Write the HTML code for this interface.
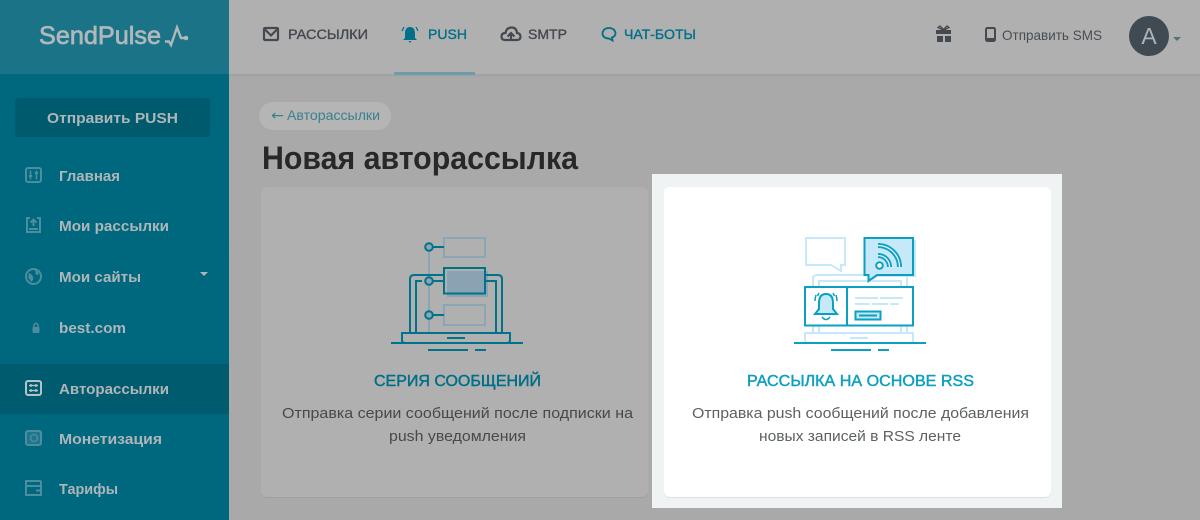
<!DOCTYPE html>
<html lang="ru"><head><meta charset="utf-8"><title>SendPulse</title>
<style>
html,body{margin:0;padding:0;width:1200px;height:520px;overflow:hidden;background:#a8a9a8}
svg{display:block;position:absolute;left:0;top:0}
text{font-family:"Liberation Sans",Arial,sans-serif}
.m{font-size:15px;font-weight:700;fill:#aeb6b8}
.n{font-size:13.5px;stroke-width:.35}
.d{font-size:15px}
.t{font-size:15.5px;stroke-width:.45}
</style></head><body>
<svg width="1200" height="520" viewBox="0 0 1200 520" xmlns="http://www.w3.org/2000/svg">
<defs><linearGradient id="s" x1="0" y1="0" x2="0" y2="1"><stop offset="0" stop-color="#9fa1a0"/><stop offset="1" stop-color="#a8a9a8"/></linearGradient></defs>
<!-- backgrounds -->
<rect width="1200" height="520" fill="#a8a9a8"/>
<rect x="229" y="74" width="971" height="4" fill="url(#s)"/>
<rect x="229" width="971" height="74" fill="#b0b0b0"/>
<rect width="229" height="520" fill="#00687e"/>
<rect width="229" height="74" fill="#1b7387"/>
<rect y="364" width="229" height="50" fill="#005b6e"/>
<rect y="251" width="229" height="1" fill="#0a6276"/>
<rect x="394" y="72" width="81" height="3" fill="#6b9da9"/>
<!-- logo -->
<text x="39" y="44" font-size="25" fill="#afb8ba" stroke="#afb8ba" stroke-width=".7" textLength="122" lengthAdjust="spacingAndGlyphs">SendPulse</text>
<path d="M165 41.500H169L171 45L177 27.500L181 38H186" fill="none" stroke="#afb8ba" stroke-width="2.400"/><circle cx="186" cy="38" r="2.300" fill="#afb8ba"/>
<!-- send button -->
<rect x="15" y="98" width="195" height="39" rx="3" fill="#005a6d"/>
<text x="47" y="123" class="m" textLength="131" lengthAdjust="spacingAndGlyphs">Отправить PUSH</text>
<!-- menu -->
<text x="59" y="181" class="m" textLength="61" lengthAdjust="spacingAndGlyphs">Главная</text>
<text x="59" y="231" class="m" textLength="110" lengthAdjust="spacingAndGlyphs">Мои рассылки</text>
<text x="59" y="282" class="m" textLength="82" lengthAdjust="spacingAndGlyphs">Мои сайты</text>
<text x="59" y="333" class="m" textLength="67" lengthAdjust="spacingAndGlyphs">best.com</text>
<text x="59" y="394" class="m" textLength="110" lengthAdjust="spacingAndGlyphs">Авторассылки</text>
<text x="59" y="444" class="m" textLength="103" lengthAdjust="spacingAndGlyphs">Монетизация</text>
<text x="59" y="494" class="m" textLength="59" lengthAdjust="spacingAndGlyphs">Тарифы</text>
<path d="M200 272H208L204 276Z" fill="#aeb6b8"/>
<!-- menu icons -->
<g fill="none" stroke="#4c8d9e" stroke-width="2">
<rect x="26" y="168" width="15" height="14" rx="2"/>
<path d="M30.500 170.500V179.500M36.500 170.500V179.500" stroke-width="1.500"/><path d="M28.800 176H32.200M34.800 173H38.200" stroke-width="2"/>
<path d="M30 218H27V232H40V218H37"/><path d="M33.500 226V220M30.500 222.500L33.500 219.500L36.500 222.500M29 229H38"/>
<circle cx="33.500" cy="276.500" r="7.500"/><path d="M29 273Q32 274 33 277Q34 280 31 282Q30 279 28 278ZM35 270Q38 271 39 274L36 275Z" fill="#4c8d9e" stroke="none"/>
<path d="M34 327V325Q36 321.500 38 325V327" stroke-width="1.500"/>
<rect x="26" y="431" width="15" height="14" rx="2"/><circle cx="34" cy="438" r="3.500" stroke-width="1.500"/>
<path d="M41 481H26V495H41V481M26 486H41M36 490.500H41"/></g>
<rect x="32.500" y="327" width="7" height="6" rx="1" fill="#4c8d9e"/>
<rect x="26" y="431" width="15" height="14" rx="2" fill="#4c8d9e" opacity=".4"/>
<g fill="none" stroke="#b4c3c6" stroke-width="2"><rect x="26" y="381" width="15" height="14" rx="2"/><path d="M29 385.500H38M29 390.500H38" stroke-width="1.300"/></g>
<g fill="#b4c3c6"><circle cx="31" cy="385.500" r="1.400"/><circle cx="36" cy="385.500" r="1.400"/><circle cx="31" cy="390.500" r="1.400"/><circle cx="36" cy="390.500" r="1.400"/></g>
<!-- top nav -->
<g fill="none" stroke="#44494f" stroke-width="2.200"><rect x="264" y="28" width="14" height="12" rx="1"/><path d="M265 29.500L271 35.500L277 29.500"/></g>
<text x="288" y="39" class="n" fill="#44494f" stroke="#44494f" textLength="80" lengthAdjust="spacingAndGlyphs">РАССЫЛКИ</text>
<path d="M410 27Q415 27 415 34V38L417 40H403L405 38V34Q405 27 410 27Z M408.500 41H411.500L410 43Z" fill="#006f87"/>
<path d="M404 27L402 31M416 27L418 31" stroke="#006f87" stroke-width="1.200" fill="none"/>
<text x="428" y="39" class="n" fill="#006f87" stroke="#006f87" textLength="39" lengthAdjust="spacingAndGlyphs">PUSH</text>
<path d="M506 40H505Q501.500 40 501.500 36.500Q501.500 33 505.500 33Q506.500 27.500 511.500 27.500Q516.500 27.500 517 33Q520.500 33.500 520.500 36.500Q520.500 40 517 40Z" fill="none" stroke="#44494f" stroke-width="2.200"/>
<path d="M511 41V34M507.500 36.500L511 33L514.500 36.500" fill="none" stroke="#44494f" stroke-width="2.200"/>
<text x="528" y="39" class="n" fill="#44494f" stroke="#44494f" textLength="39" lengthAdjust="spacingAndGlyphs">SMTP</text>
<path d="M609 28C604.500 28 602.500 31 602.500 33.500C602.500 36.500 605 38.500 609 38.500L612.500 40.500L612 37.500C614.500 36.500 615.500 35.500 615.500 33.500C615.500 31 613.500 28 609 28Z" fill="none" stroke="#006f87" stroke-width="1.800"/>
<text x="624" y="39" class="n" fill="#006f87" stroke="#006f87" textLength="72" lengthAdjust="spacingAndGlyphs">ЧАТ-БОТЫ</text>
<!-- gift / phone -->
<g fill="#44494f"><rect x="936" y="30" width="15" height="4"/><rect x="937" y="36" width="6" height="6"/><rect x="945" y="36" width="6" height="6"/></g>
<path d="M943 30L938 27.500L940 26L943.500 29.500L947 26L949 27.500L944 30" stroke="#44494f" stroke-width="1.300" fill="none"/>
<rect x="986" y="28" width="9" height="13" rx="1.500" fill="none" stroke="#44494f" stroke-width="2"/><rect x="986" y="38" width="9" height="3" fill="#44494f"/>
<text x="1002" y="40" font-size="14" fill="#484e54" textLength="100" lengthAdjust="spacingAndGlyphs">Отправить SMS</text>
<circle cx="1149" cy="36" r="20" fill="#3f4a52"/>
<text x="1149" y="44" font-size="23" fill="#b0b4b6" text-anchor="middle">A</text>
<path d="M1173 37H1181L1177 41Z" fill="#54707f"/>
<!-- breadcrumb + title -->
<rect x="259" y="102" width="132" height="28" rx="14" fill="#b4b5b4"/>
<text x="271" y="120" font-size="14" fill="#3c7f8e" style="font-family:'DejaVu Sans',sans-serif" textLength="13" lengthAdjust="spacingAndGlyphs">←</text>
<text x="287" y="120" font-size="13.500" fill="#3c7f8e" textLength="93" lengthAdjust="spacingAndGlyphs">Авторассылки</text>
<text x="262" y="169" font-size="32" font-weight="700" fill="#26282a" textLength="316" lengthAdjust="spacingAndGlyphs">Новая авторассылка</text>
<!-- left card -->
<rect x="261" y="188" width="387" height="310" rx="6" fill="#a09f9f"/>
<rect x="261" y="187" width="387" height="310" rx="6" fill="#b0b0b0"/>
<!-- laptop icon -->
<g fill="none" stroke="#8aa6b4" stroke-width="2">
<path d="M429 246V333"/><rect x="444" y="238" width="41" height="19"/><rect x="444" y="305" width="41" height="20"/></g>
<rect x="447" y="271" width="41" height="26" fill="#8aa3b3"/>
<g fill="none" stroke="#00728a" stroke-width="2">
<rect x="444" y="268" width="41" height="25.500"/>
<path d="M410 333V279Q410 275 414 275H444M485 275H498Q502 275 502 279V333"/>
<path d="M416 333V281H422M485 281H496V333"/>
<path d="M402 333H510V340Q510 343 507 343H405Q402 343 402 340Z"/>
<path d="M391 343H523M447 338H465M428 350H468M475 350H486"/>
<path d="M433 247H444M433 281H444M433 315H444"/>
<circle cx="429" cy="247" r="3.800" fill="#8aa6b4"/><circle cx="429" cy="281" r="3.800" fill="#8aa6b4"/><circle cx="429" cy="315" r="3.800" fill="#8aa6b4"/></g>
<text x="374" y="386" class="t" fill="#006f87" stroke="#006f87" textLength="167" lengthAdjust="spacingAndGlyphs">СЕРИЯ СООБЩЕНИЙ</text>
<text x="282" y="418" class="d" fill="#47494b" textLength="351" lengthAdjust="spacingAndGlyphs">Отправка серии сообщений после подписки на</text>
<text x="389" y="441" class="d" fill="#47494b" textLength="137" lengthAdjust="spacingAndGlyphs">push уведомления</text>
<!-- highlight -->
<rect x="652" y="174" width="410" height="334" fill="#eff3f4"/>
<rect x="664" y="188" width="387" height="310" rx="6" fill="#dbe1e4"/>
<rect x="664" y="187" width="387" height="310" rx="6" fill="#fff"/>
<!-- rss icon -->
<g fill="none" stroke="#c5e9f8" stroke-width="2">
<path d="M806 238H845V265H841V271L831 265H806Z"/>
<path d="M813 333V279Q813 275 817 275H906Q907 275 907 279V333M819 333V281H901V333"/>
<path d="M805 333H913V340Q913 343 910 343H808Q805 343 805 340Z"/>
<path d="M850 338H868"/></g>
<path d="M867 240H916V277H877L868 283Z" fill="#c5e9f8"/>
<path d="M864.500 238H913V275H877L868.500 281V275H864.500Z" fill="#c5e9f8" stroke="#0ba0c2" stroke-width="2"/>
<g fill="none"><path d="M878 255.500A11.500 11.500 0 0 1 889.500 267" stroke="#0ba0c2" stroke-width="5"/><path d="M878 255.500A11.500 11.500 0 0 1 889.500 267" stroke="#e8f7fd" stroke-width="1.300"/>
<path d="M878 245.500A21.500 21.500 0 0 1 899.500 267" stroke="#0ba0c2" stroke-width="5"/><path d="M878 245.500A21.500 21.500 0 0 1 899.500 267" stroke="#e8f7fd" stroke-width="1.300"/></g>
<circle cx="879.500" cy="265.500" r="3.300" fill="#fff" stroke="#0ba0c2" stroke-width="2"/>
<rect x="805" y="287" width="108" height="38.500" fill="#fff" stroke="#0ba0c2" stroke-width="2"/>
<path d="M847 287V326" stroke="#0ba0c2" stroke-width="2"/>
<path d="M826 294Q833 294 833 303V309L837 314H815L819 309V303Q819 294 826 294Z" fill="#c5e9f8" stroke="#0ba0c2" stroke-width="2"/>
<path d="M822 317Q826 322 830 317M816 295Q815 298 815 301M836 295Q837 298 837 301M819 293L817.500 296M833 293L834.500 296" fill="none" stroke="#0ba0c2" stroke-width="1.500"/>
<path d="M855 298H878M880 298H903M855 304H870M872 304H888M890 304H899" stroke="#c5e9f8" stroke-width="2" fill="none"/>
<rect x="855.500" y="311.500" width="25" height="8" fill="#c5e9f8" stroke="#0ba0c2" stroke-width="2"/>
<path d="M859 315.500H877" stroke="#0ba0c2" stroke-width="2"/>
<path d="M794 343H926M831 350H871M878 350H889" stroke="#0ba0c2" stroke-width="2" fill="none"/>
<text x="747" y="386" class="t" fill="#0e9fc0" stroke="#0e9fc0" textLength="227" lengthAdjust="spacingAndGlyphs">РАССЫЛКА НА ОСНОВЕ RSS</text>
<text x="692" y="418" class="d" fill="#5c6164" textLength="337" lengthAdjust="spacingAndGlyphs">Отправка push сообщений после добавления</text>
<text x="759" y="441" class="d" fill="#5c6164" textLength="202" lengthAdjust="spacingAndGlyphs">новых записей в RSS ленте</text>
</svg>
</body></html>
